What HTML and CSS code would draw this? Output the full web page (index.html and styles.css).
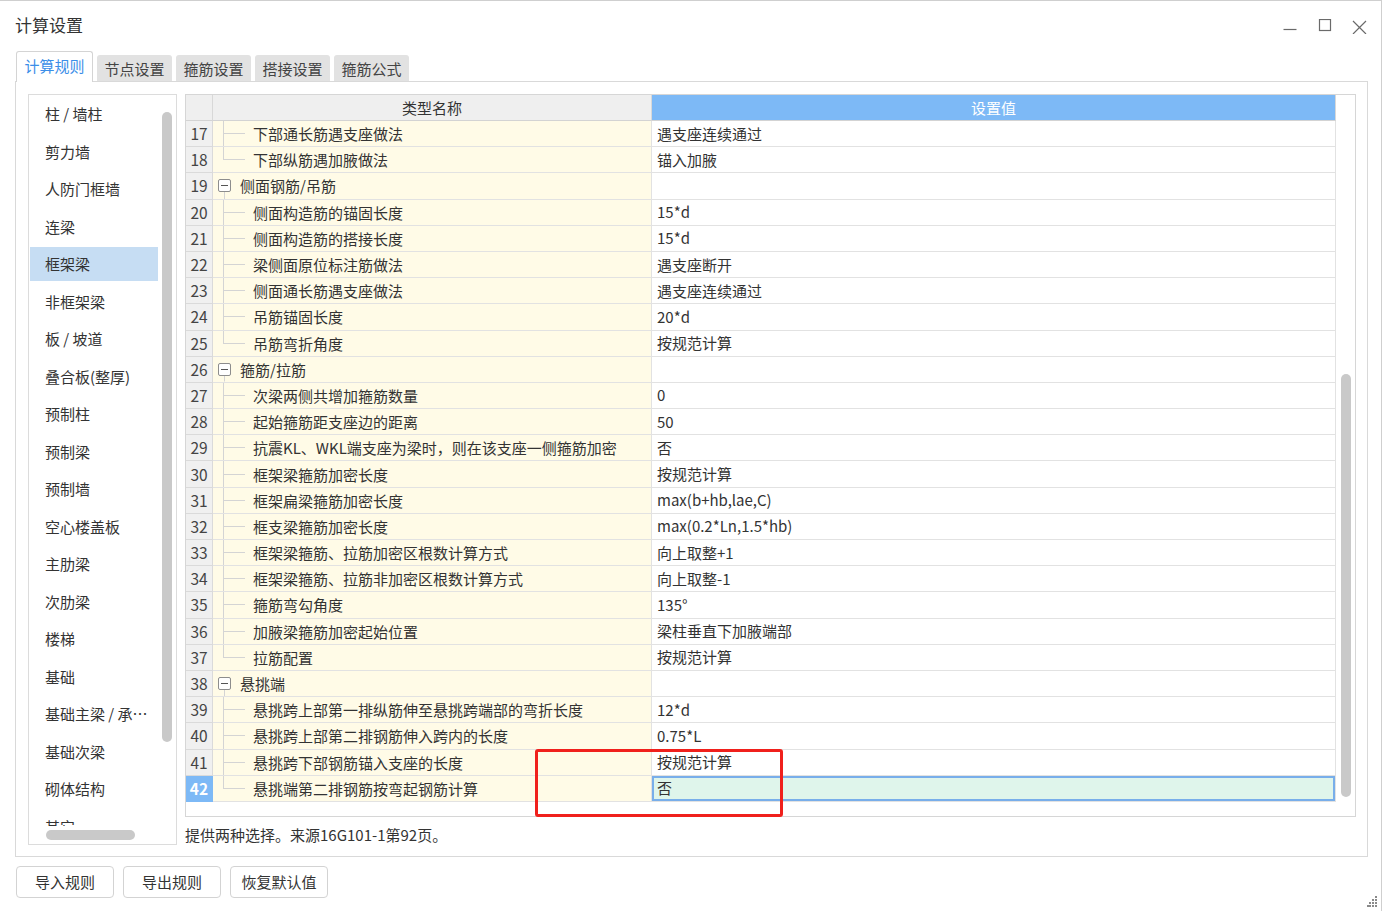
FILE: index.html
```html
<!DOCTYPE html>
<html lang="zh-CN">
<head>
<meta charset="utf-8">
<title>计算设置</title>
<link rel="stylesheet" href="styles.css">
</head>
<body>
<div class="window">
  <div class="titlebar">
    <div class="title">计算设置</div>
    <div class="controls">
      <span class="ctl"><svg width="14" height="14" viewBox="0 0 14 14"><path d="M0.5 10.5H13.5" stroke="#6a6a6a" stroke-width="1.2"/></svg></span>
      <span class="ctl"><svg width="14" height="14" viewBox="0 0 14 14"><rect x="1.5" y="0.5" width="11" height="11" fill="none" stroke="#6a6a6a" stroke-width="1.2"/></svg></span>
      <span class="ctl"><svg width="15" height="15" viewBox="0 0 15 15"><path d="M1 2L14 15M14 2L1 15" stroke="#6a6a6a" stroke-width="1.2"/></svg></span>
    </div>
  </div>

  <div class="tabs">
    <div class="tab active">计算规则</div>
    <div class="tab">节点设置</div>
    <div class="tab">箍筋设置</div>
    <div class="tab">搭接设置</div>
    <div class="tab">箍筋公式</div>
  </div>

  <div class="panel">
    <div class="side">
      <div class="side-view">
        <div class="items">
          <div class="item">柱 / 墙柱</div>
          <div class="item">剪力墙</div>
          <div class="item">人防门框墙</div>
          <div class="item">连梁</div>
          <div class="item sel">框架梁</div>
          <div class="item">非框架梁</div>
          <div class="item">板 / 坡道</div>
          <div class="item">叠合板(整厚)</div>
          <div class="item">预制柱</div>
          <div class="item">预制梁</div>
          <div class="item">预制墙</div>
          <div class="item">空心楼盖板</div>
          <div class="item">主肋梁</div>
          <div class="item">次肋梁</div>
          <div class="item">楼梯</div>
          <div class="item">基础</div>
          <div class="item">基础主梁 / 承台梁</div>
          <div class="item">基础次梁</div>
          <div class="item">砌体结构</div>
          <div class="item">其它</div>
        </div>
        <div class="side-vtrack"><div class="side-vthumb"></div></div>
      </div>
      <div class="side-htrack"><div class="side-hthumb"></div></div>
    </div>

    <div class="main">
      <div class="gridbox">
        <div class="grid">
          <div class="hdr">
            <div class="n"></div>
            <div class="k">类型名称</div>
            <div class="v">设置值</div>
          </div>
          <div class="row"><div class="n">17</div><div class="k"><i class="br"></i>下部通长筋遇支座做法</div><div class="v">遇支座连续通过</div></div>
          <div class="row"><div class="n">18</div><div class="k"><i class="br last"></i>下部纵筋遇加腋做法</div><div class="v">锚入加腋</div></div>
          <div class="row"><div class="n">19</div><div class="k grp"><i class="box"></i>侧面钢筋/吊筋</div><div class="v"></div></div>
          <div class="row"><div class="n">20</div><div class="k"><i class="br"></i>侧面构造筋的锚固长度</div><div class="v">15*d</div></div>
          <div class="row"><div class="n">21</div><div class="k"><i class="br"></i>侧面构造筋的搭接长度</div><div class="v">15*d</div></div>
          <div class="row"><div class="n">22</div><div class="k"><i class="br"></i>梁侧面原位标注筋做法</div><div class="v">遇支座断开</div></div>
          <div class="row"><div class="n">23</div><div class="k"><i class="br"></i>侧面通长筋遇支座做法</div><div class="v">遇支座连续通过</div></div>
          <div class="row"><div class="n">24</div><div class="k"><i class="br"></i>吊筋锚固长度</div><div class="v">20*d</div></div>
          <div class="row"><div class="n">25</div><div class="k"><i class="br last"></i>吊筋弯折角度</div><div class="v">按规范计算</div></div>
          <div class="row"><div class="n">26</div><div class="k grp"><i class="box"></i>箍筋/拉筋</div><div class="v"></div></div>
          <div class="row"><div class="n">27</div><div class="k"><i class="br"></i>次梁两侧共增加箍筋数量</div><div class="v">0</div></div>
          <div class="row"><div class="n">28</div><div class="k"><i class="br"></i>起始箍筋距支座边的距离</div><div class="v">50</div></div>
          <div class="row"><div class="n">29</div><div class="k"><i class="br"></i>抗震KL、WKL端支座为梁时，则在该支座一侧箍筋加密</div><div class="v">否</div></div>
          <div class="row"><div class="n">30</div><div class="k"><i class="br"></i>框架梁箍筋加密长度</div><div class="v">按规范计算</div></div>
          <div class="row"><div class="n">31</div><div class="k"><i class="br"></i>框架扁梁箍筋加密长度</div><div class="v">max(b+hb,lae,C)</div></div>
          <div class="row"><div class="n">32</div><div class="k"><i class="br"></i>框支梁箍筋加密长度</div><div class="v">max(0.2*Ln,1.5*hb)</div></div>
          <div class="row"><div class="n">33</div><div class="k"><i class="br"></i>框架梁箍筋、拉筋加密区根数计算方式</div><div class="v">向上取整+1</div></div>
          <div class="row"><div class="n">34</div><div class="k"><i class="br"></i>框架梁箍筋、拉筋非加密区根数计算方式</div><div class="v">向上取整-1</div></div>
          <div class="row"><div class="n">35</div><div class="k"><i class="br"></i>箍筋弯勾角度</div><div class="v">135°</div></div>
          <div class="row"><div class="n">36</div><div class="k"><i class="br"></i>加腋梁箍筋加密起始位置</div><div class="v">梁柱垂直下加腋端部</div></div>
          <div class="row"><div class="n">37</div><div class="k"><i class="br last"></i>拉筋配置</div><div class="v">按规范计算</div></div>
          <div class="row"><div class="n">38</div><div class="k grp"><i class="box"></i>悬挑端</div><div class="v"></div></div>
          <div class="row"><div class="n">39</div><div class="k"><i class="br"></i>悬挑跨上部第一排纵筋伸至悬挑跨端部的弯折长度</div><div class="v">12*d</div></div>
          <div class="row"><div class="n">40</div><div class="k"><i class="br"></i>悬挑跨上部第二排钢筋伸入跨内的长度</div><div class="v">0.75*L</div></div>
          <div class="row"><div class="n">41</div><div class="k"><i class="br"></i>悬挑跨下部钢筋锚入支座的长度</div><div class="v">按规范计算</div></div>
          <div class="row sel"><div class="n">42</div><div class="k"><i class="br last"></i>悬挑端第二排钢筋按弯起钢筋计算</div><div class="v">否</div></div>
        </div>
        <div class="vtrack"><div class="vthumb"></div></div>
      </div>
      <div class="desc">提供两种选择。来源16G101-1第92页。</div>
    </div>
  </div>

  <div class="footer">
    <button class="btn">导入规则</button>
    <button class="btn">导出规则</button>
    <button class="btn">恢复默认值</button>
    <svg class="grip" width="11" height="11" viewBox="0 0 11 11">
      <g fill="#8a8a8a">
        <rect x="8" y="0" width="2" height="2"/>
        <rect x="5" y="3" width="2" height="2"/><rect x="8" y="3" width="2" height="2"/>
        <rect x="2" y="6" width="2" height="2"/><rect x="5" y="6" width="2" height="2"/><rect x="8" y="6" width="2" height="2"/>
        <rect x="0" y="9" width="2" height="2"/><rect x="2" y="9" width="2" height="2"/><rect x="5" y="9" width="2" height="2"/><rect x="8" y="9" width="2" height="2"/>
      </g>
    </svg>
  </div>

  <div class="annot"></div>
</div>
</body>
</html>
```

FILE: styles.css
```css
* { box-sizing: border-box; }
html, body { margin: 0; padding: 0; }
body {
  font-family: "Noto Sans CJK SC", "Noto Sans", sans-serif;
  font-size: 15px;
  color: #333;
  background: #fff;
}
.window {
  position: relative;
  width: 1382px;
  height: 911px;
  border-top: 1px solid #cfcfcf;
  border-right: 1px solid #cfcfcf;
  display: flex;
  flex-direction: column;
  overflow: hidden;
  background: #fff;
}
.titlebar {
  height: 50px;
  flex: none;
  display: flex;
  align-items: center;
  padding-left: 15px;
  padding-right: 4px;
}
.title {
  font-size: 17px;
  line-height: 24px;
  margin-top: -2px;
  color: #333;
}
.controls { margin-left: auto; display: flex; }
.ctl {
  width: 35px;
  height: 30px;
  display: flex;
  align-items: center;
  justify-content: center;
}

/* tabs */
.tabs {
  height: 30px;
  flex: none;
  display: flex;
  align-items: flex-end;
  gap: 4px;
  padding-left: 16px;
  position: relative;
  z-index: 2;
}
.tab {
  width: 75px;
  height: 26px;
  background: #e2e2e2;
  border-radius: 3px 3px 0 0;
  display: flex;
  align-items: center;
  justify-content: center;
  color: #444;
  line-height: 1;
}
.tab.active {
  width: 77px;
  height: 31px;
  margin-bottom: -1px;
  background: #fff;
  border: 1px solid #d4d4d4;
  border-bottom: none;
  color: #3b8ee8;
  padding-bottom: 3px;
}

/* panel */
.panel {
  flex: none;
  margin-left: 15px;
  width: 1353px;
  height: 776px;
  border: 1px solid #d9d9d9;
  padding: 12px 11px 12px 12px;
  display: flex;
  gap: 8px;
}

/* side list */
.side {
  width: 149px;
  height: 751px;
  flex: none;
  border: 1px solid #dcdcdc;
  display: flex;
  flex-direction: column;
}
.side-view {
  height: 731px;
  flex: none;
  display: flex;
  overflow: hidden;
}
.items {
  width: 130px;
  flex: none;
  padding: 2px 1px 0;
  display: flex;
  flex-direction: column;
  gap: 3.5px;
}
.item {
  flex: none;
  height: 34px;
  line-height: 33px;
  padding: 0 8px 0 15px;
  white-space: nowrap;
  overflow: hidden;
  text-overflow: ellipsis;
  color: #333;
}
.item.sel { background: #c6ddf3; }
.side-vtrack { width: 17px; flex: none; }
.side-vthumb {
  margin: 17px 0 0 3px;
  width: 10px;
  height: 630px;
  border-radius: 5px;
  background: #c9c9c9;
}
.side-htrack { height: 18px; flex: none; padding: 4px 0 0 17px; }
.side-hthumb {
  width: 89px;
  height: 10px;
  border-radius: 5px;
  background: #c9c9c9;
}

/* main table */
.main {
  width: 1171px;
  flex: none;
  display: flex;
  flex-direction: column;
}
.gridbox {
  height: 723px;
  flex: none;
  border: 1px solid #d6d6d6;
  display: flex;
}
.grid {
  width: 1150px;
  flex: none;
  display: flex;
  flex-direction: column;
}
.hdr, .row { display: flex; flex: none; }
.hdr { height: 26px; }
.row { height: 26.2px; }
.n { width: 27px; flex: none; }
.k { width: 439px; flex: none; }
.v { width: 684px; flex: none; }

.hdr > div {
  border-bottom: 1px solid #d3d3d3;
  border-right: 1px solid #d8d8d8;
  display: flex;
  align-items: center;
  justify-content: center;
  background: #efefef;
  color: #333;
}
.hdr > .v {
  background: #7db9f6;
  color: #fff;
  border-right-color: #d8d8d8;
}

.row > div {
  border-bottom: 1px solid #e2e2e2;
  border-right: 1px solid #e2e2e2;
  display: flex;
  align-items: center;
  white-space: nowrap;
  overflow: hidden;
  padding-bottom: 1px;
}
.row > .n {
  background: #f0f0f0;
  justify-content: center;
  color: #444;
  font-size: 15.5px;
  border-color: #dadada;
}
.row > .k { background: #fffbe7; color: #333; padding-bottom: 0; }
.row > .v { background: #fff; padding-left: 5px; color: #333; }
.k > .txt { padding-bottom: 1px; }

.br {
  flex: none;
  width: 30px;
  height: 100%;
  margin-left: 10px;
  background:
    linear-gradient(#d4d4d4, #d4d4d4) 0 0 / 1px 100% no-repeat,
    linear-gradient(#d4d4d4, #d4d4d4) 0 50% / 22px 1px no-repeat;
}
.br.last {
  background:
    linear-gradient(#d4d4d4, #d4d4d4) 0 0 / 1px 50% no-repeat,
    linear-gradient(#d4d4d4, #d4d4d4) 0 50% / 22px 1px no-repeat;
}
.row > .k.grp {
  background:
    linear-gradient(#d4d4d4, #d4d4d4) 11px 100% / 1px 50% no-repeat,
    #fffbe7;
}
.box {
  flex: none;
  width: 13px;
  height: 13px;
  margin: 0 9px 0 5px;
  border: 1px solid #8d8d8d;
  border-radius: 2px;
  background: #fff linear-gradient(#555, #555) center / 7px 1px no-repeat;
}

.row.sel > .n {
  background: #7db9f6;
  color: #fff;
  font-weight: bold;
  border-color: #7db9f6;
}
.row.sel > .v {
  background: #dff5eb;
  box-shadow: inset 0 0 0 2px #78aeea;
}

.vtrack { width: 19px; flex: none; }
.vthumb {
  margin: 279px 0 0 5px;
  width: 10px;
  height: 423px;
  border-radius: 5px;
  background: #c9c9c9;
}
.desc {
  margin-top: 8px;
  line-height: 20px;
  color: #333;
}

/* footer */
.footer {
  flex: 1;
  display: flex;
  align-items: flex-start;
  gap: 9px;
  padding: 9px 3px 0 16px;
}
.btn {
  width: 98px;
  height: 32px;
  border: 1px solid #d3d3d3;
  border-radius: 4px;
  background: #fff;
  font-family: inherit;
  font-size: 15px;
  color: #333;
  padding: 0 0 1px;
}
.grip {
  margin-left: auto;
  align-self: flex-end;
  margin-bottom: 4px;
}

/* red annotation rectangle drawn over the table */
.annot {
  position: absolute;
  left: 535px;
  top: 748px;
  width: 248px;
  height: 68px;
  border: 3px solid #f0201c;
  border-radius: 3px;
  pointer-events: none;
}
```
